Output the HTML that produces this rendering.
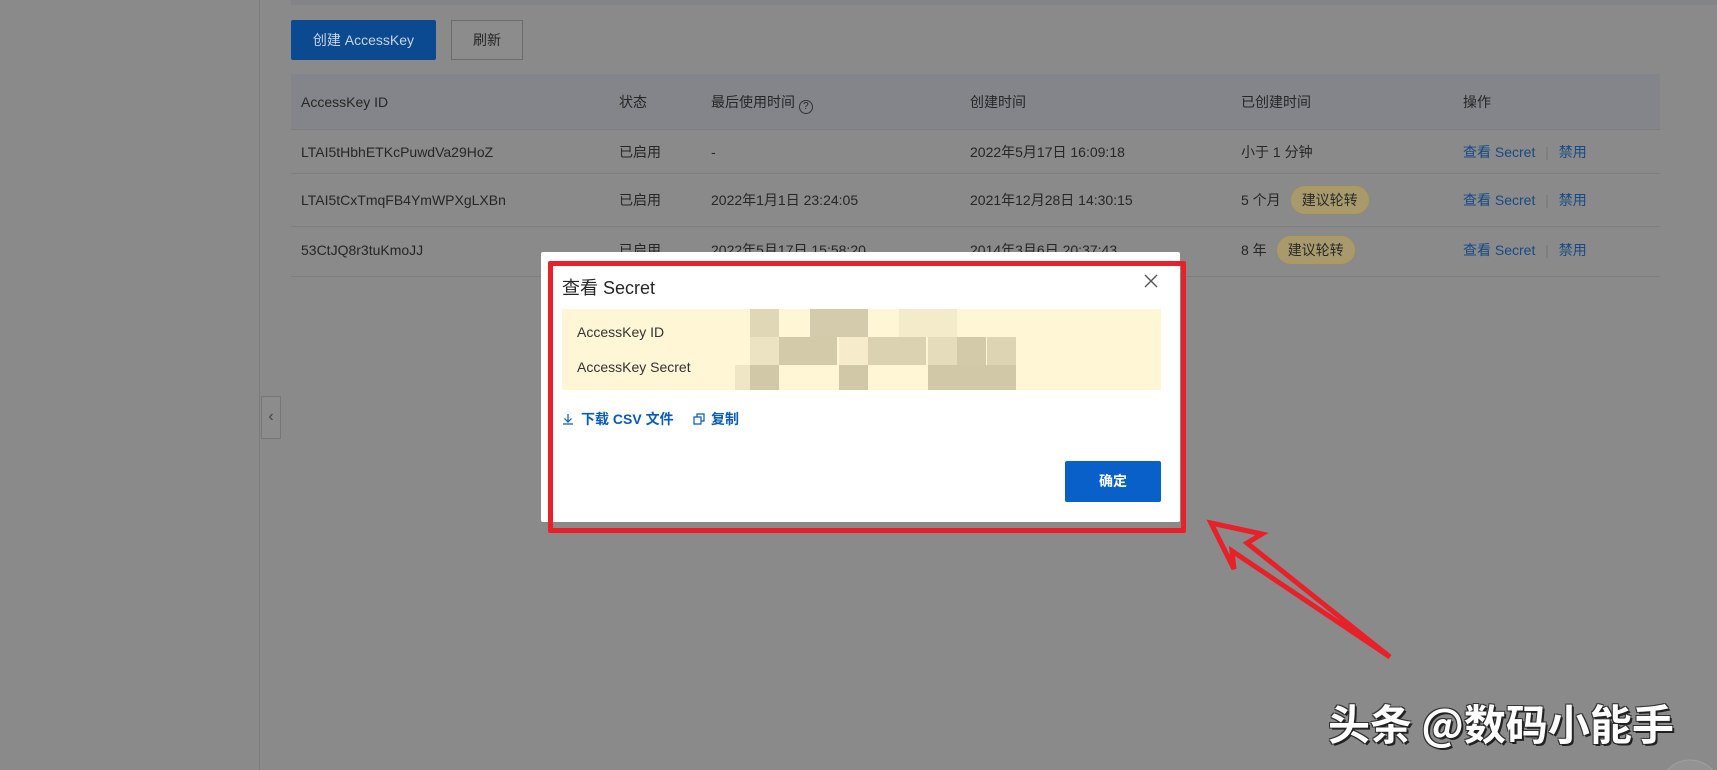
<!DOCTYPE html>
<html><head><meta charset="utf-8"><style>
*{margin:0;padding:0;box-sizing:border-box}
html,body{width:1717px;height:770px;overflow:hidden}
body{background:#8a8a8a;font-family:"Liberation Sans","Noto Sans CJK SC",sans-serif;position:relative;color:#262626;font-size:14px}
.a{position:absolute;white-space:nowrap;line-height:20px}
.side{left:0;top:0;width:260px;height:770px;background:#8a8a8a;border-right:1px solid #7c7c7c}
.topbar{left:291px;top:0;width:1426px;height:5px;background:#828488}
.btn1{left:291px;top:20px;width:145px;height:40px;background:#0b4a90;color:#c9d4e3;font-size:14px;line-height:40px;text-align:center;border-radius:2px}
.btn2{left:451px;top:20px;width:72px;height:40px;border:1px solid #6c6c6c;color:#262626;line-height:38px;text-align:center;background:#8c8c8c}
.th{left:291px;top:74px;width:1369px;height:56px;background:#83858a;border-bottom:1px solid #7d7d7d}
.line{left:291px;width:1369px;height:1px;background:#7f7f7f}
.lk{color:#154a86}
.badge{display:inline-block;background:#a89a6c;border:1px solid #b39b4a;border-radius:14px;padding:0 10px;line-height:26px;margin-left:10px;color:#2a2a2a}
.modal{left:541px;top:252px;width:639px;height:270px;background:#fff;border-radius:2px}
.red{left:548px;top:261px;width:638px;height:272px;border:5px solid #e8202a;border-radius:2px}
.yel{left:562px;top:309px;width:599px;height:81px;background:#fff6d6}
.px{position:absolute;width:29px;height:28px}
.ok{left:1065px;top:461px;width:96px;height:41px;background:#0960c8;color:#fff;font-weight:bold;text-align:center;line-height:41px;border-radius:2px}
.wm{left:1328px;top:698px;font-size:42px;line-height:50px;font-weight:bold;color:#fff;text-shadow:2px 2px 0 #222,-1px -1px 0 #333,1px -1px 0 #333,-1px 1px 0 #333;font-family:"Noto Sans CJK SC",sans-serif}
</style></head><body>
<div class="a side"></div>
<div class="a topbar"></div>
<div class="a btn1">创建 AccessKey</div>
<div class="a btn2">刷新</div>
<div class="a th"></div>
<div class="a" style="left:301px;top:92px">AccessKey ID</div>
<div class="a" style="left:619px;top:92px">状态</div>
<div class="a" style="left:711px;top:92px">最后使用时间 <span style="display:inline-block;width:14px;height:14px;border:1px solid #333;border-radius:50%;font-size:10px;line-height:12px;text-align:center;vertical-align:-2px">?</span></div>
<div class="a" style="left:970px;top:92px">创建时间</div>
<div class="a" style="left:1241px;top:92px">已创建时间</div>
<div class="a" style="left:1463px;top:92px">操作</div>
<div class="a line" style="top:173px"></div>
<div class="a line" style="top:226px"></div>
<div class="a line" style="top:276px"></div>
<div class="a" style="left:301px;top:142px">LTAI5tHbhETKcPuwdVa29HoZ</div>
<div class="a" style="left:619px;top:142px">已启用</div>
<div class="a" style="left:711px;top:142px">-</div>
<div class="a" style="left:970px;top:142px">2022年5月17日 16:09:18</div>
<div class="a" style="left:1241px;top:142px">小于 1 分钟</div>
<div class="a lk" style="left:1463px;top:142px">查看 Secret <span style="color:#777;margin:0 6px">|</span> 禁用</div>
<div class="a" style="left:301px;top:190px">LTAI5tCxTmqFB4YmWPXgLXBn</div>
<div class="a" style="left:619px;top:190px">已启用</div>
<div class="a" style="left:711px;top:190px">2022年1月1日 23:24:05</div>
<div class="a" style="left:970px;top:190px">2021年12月28日 14:30:15</div>
<div class="a" style="left:1241px;top:186px;line-height:28px">5 个月<span class="badge">建议轮转</span></div>
<div class="a lk" style="left:1463px;top:190px">查看 Secret <span style="color:#777;margin:0 6px">|</span> 禁用</div>
<div class="a" style="left:301px;top:240px">53CtJQ8r3tuKmoJJ</div>
<div class="a" style="left:619px;top:240px">已启用</div>
<div class="a" style="left:711px;top:240px">2022年5月17日 15:58:20</div>
<div class="a" style="left:970px;top:240px">2014年3月6日 20:37:43</div>
<div class="a" style="left:1241px;top:236px;line-height:28px">8 年<span class="badge">建议轮转</span></div>
<div class="a lk" style="left:1463px;top:240px">查看 Secret <span style="color:#777;margin:0 6px">|</span> 禁用</div>
<div class="a" style="left:261px;top:396px;width:20px;height:43px;background:#8c8c8c;border:1px solid #777;color:#444;line-height:40px;text-align:center;font-size:16px">‹</div>

<div class="a modal"></div>
<div class="a" style="left:562px;top:276px;font-size:18px;line-height:24px;color:#262626">查看 Secret</div>
<svg class="a" style="left:1144px;top:274px" width="14" height="14"><path d="M1 1L13 13M13 1L1 13" stroke="#555" stroke-width="1.4"/></svg>
<div class="a yel">
<div class="px" style="left:188px;top:0;background:#e0d7b7"></div>
<div class="px" style="left:248px;top:0;background:#d3cbab;width:58px"></div>
<div class="px" style="left:337px;top:0;background:#f4ebca;width:58px"></div>
<div class="px" style="left:188px;top:28px;background:#ece3c3"></div>
<div class="px" style="left:217px;top:28px;background:#d2caa9;width:58px"></div>
<div class="px" style="left:277px;top:28px;background:#f6eccb"></div>
<div class="px" style="left:306px;top:28px;background:#dbd2b2;width:58px"></div>
<div class="px" style="left:366px;top:28px;background:#e5dcbb"></div>
<div class="px" style="left:395px;top:28px;background:#d3caa9"></div>
<div class="px" style="left:425px;top:28px;background:#ddd4b4"></div>
<div class="px" style="left:173px;top:56px;background:#efe6c5;width:15px;height:25px"></div>
<div class="px" style="left:188px;top:56px;background:#d0c8a7;height:25px"></div>
<div class="px" style="left:277px;top:56px;background:#d0c8a7;height:25px"></div>
<div class="px" style="left:366px;top:56px;background:#d0c8a7;width:88px;height:25px"></div>
</div>
<div class="a" style="left:577px;top:322px;color:#333">AccessKey ID</div>
<div class="a" style="left:577px;top:357px;color:#333">AccessKey Secret</div>
<svg class="a" style="left:562px;top:413px" width="12" height="12"><path d="M6 1V9M2.5 5.5L6 9L9.5 5.5M1 11H11" stroke="#0a5bb5" fill="none" stroke-width="1.2"/></svg>
<div class="a" style="left:581px;top:409px;color:#0a5bb5;font-weight:bold">下载 CSV 文件</div>
<svg class="a" style="left:693px;top:413px" width="12" height="12"><path d="M1 4H8V11H1ZM4 4V1H11V8H8" stroke="#0a5bb5" fill="none" stroke-width="1.2"/></svg>
<div class="a" style="left:711px;top:409px;color:#0a5bb5;font-weight:bold">复制</div>
<div class="a ok">确定</div>
<div class="a red"></div>

<svg class="a" style="left:0;top:0;line-height:0" width="1717" height="770">
<path d="M1211 523 L1262 534 L1247 543 L1390 657 L1232 551 L1234 569 Z" fill="none" stroke="#e8202a" stroke-width="5" stroke-linejoin="miter"/>
<circle cx="1690" cy="790" r="30" fill="#939393" stroke="#a0a0a0"/>
</svg>
<div class="a wm">头条 @数码小能手</div>
</body></html>
